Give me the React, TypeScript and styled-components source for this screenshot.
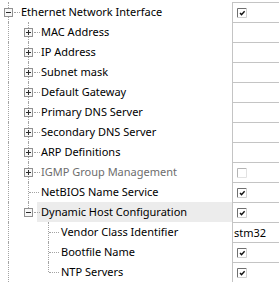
import React from 'react';
import styled, {createGlobalStyle} from 'styled-components';

type Kind = 'plus' | 'minus' | 'leaf';
type Value = {type: 'check'; checked: boolean} | {type: 'text'; text: string};

interface IRow {
  label: string;
  level: number;
  kind: Kind;
  last?: boolean;
  disabled?: boolean;
  selected?: boolean;
  value?: Value;
}

const rows: IRow[] = [
  {label: 'Ethernet Network Interface', level: 0, kind: 'minus', value: {type: 'check', checked: true}},
  {label: 'MAC Address', level: 1, kind: 'plus'},
  {label: 'IP Address', level: 1, kind: 'plus'},
  {label: 'Subnet mask', level: 1, kind: 'plus'},
  {label: 'Default Gateway', level: 1, kind: 'plus'},
  {label: 'Primary DNS Server', level: 1, kind: 'plus'},
  {label: 'Secondary DNS Server', level: 1, kind: 'plus'},
  {label: 'ARP Definitions', level: 1, kind: 'plus'},
  {label: 'IGMP Group Management', level: 1, kind: 'plus', disabled: true, value: {type: 'check', checked: false}},
  {label: 'NetBIOS Name Service', level: 1, kind: 'leaf', value: {type: 'check', checked: true}},
  {label: 'Dynamic Host Configuration', level: 1, kind: 'minus', last: true, selected: true, value: {type: 'check', checked: true}},
  {label: 'Vendor Class Identifier', level: 2, kind: 'leaf', value: {type: 'text', text: 'stm32'}},
  {label: 'Bootfile Name', level: 2, kind: 'leaf', value: {type: 'check', checked: true}},
  {label: 'NTP Servers', level: 2, kind: 'leaf', last: true, value: {type: 'check', checked: true}},
];

const GlobalStyle = createGlobalStyle`
  html, body {
    margin: 0;
    padding: 0;
    background: #fff;
  }
  body {
    font-family: "Noto Sans", "DejaVu Sans", sans-serif;
    font-size: 11px;
    color: #000;
  }
`;

const ExpandBox = ({open}: {open: boolean}) => (
  <svg width="9" height="9" viewBox="0 0 9 9">
    <rect x="0.5" y="0.5" width="8" height="8" fill="#f7f7f7" stroke="#919191" />
    <line x1="2" y1="4.5" x2="7" y2="4.5" stroke="#2b2b2b" />
    {!open && <line x1="4.5" y1="2" x2="4.5" y2="7" stroke="#2b2b2b" />}
  </svg>
);

const CheckBox = ({checked, disabled}: {checked: boolean; disabled?: boolean}) => (
  <svg width="10" height="10" viewBox="0 0 10 10">
    <rect x="0" y="0" width="10" height="10" fill="#fff" />
    <path d="M0.5 9.5 V0.5 H9.5" fill="none" stroke={disabled ? '#b4b4b4' : '#6f6f6f'} />
    <path d="M9.5 0.5 V9.5 H0.5" fill="none" stroke={disabled ? '#e2e2e2' : '#d0d0d0'} />
    {checked && (
      <path d="M3 5 L4.5 6.6 L7.6 3.2" fill="none" stroke="#111" strokeWidth="1.4" />
    )}
  </svg>
);

const guidesFor = (row: IRow) => {
  // continuation of the ancestors' lines: root line always runs on,
  // the level one line stops after the last child (Dynamic Host Configuration)
  const guides: {vert: 'full' | 'top' | 'none'; kind?: Kind}[] = [];
  for (let j = 0; j < row.level; j++) {
    guides.push({vert: j === 0 ? 'full' : 'none'});
  }
  guides.push({vert: row.last ? 'top' : 'full', kind: row.kind});
  return guides;
};

const App = () => {
  return (
    <>
      <GlobalStyle />
      <Tree role="tree" aria-label="Ethernet Network Interface">
        {rows.map(row => (
          <Row key={row.label} role="treeitem">
            <NameCell>
              {guidesFor(row).map((g, i) => (
                <Guide key={i} $vert={g.vert} $branch={g.kind === 'leaf'}>
                  {g.kind && g.kind !== 'leaf' && <ExpandBox open={g.kind === 'minus'} />}
                  {g.kind && g.kind !== 'leaf' && <BoxTail />}
                </Guide>
              ))}
              <Label $disabled={row.disabled} $selected={row.selected}>
                {row.label}
              </Label>
            </NameCell>
            <ValueCell $text={row.value?.type === 'text'}>
              {row.value?.type === 'check' && (
                <CheckBox checked={row.value.checked} disabled={row.disabled} />
              )}
              {row.value?.type === 'text' && row.value.text}
            </ValueCell>
          </Row>
        ))}
      </Tree>
    </>
  );
};

export default App;

const Tree = styled.div`
  width: 279px;
  height: 282px;
  overflow: hidden;
  padding-top: 2px;
  box-sizing: border-box;
`;

const Row = styled.div`
  display: flex;
  height: 20px;
`;

const NameCell = styled.div`
  width: 232px;
  display: flex;
  align-items: stretch;
  flex-shrink: 0;
`;

const Guide = styled.div<{$vert: 'full' | 'top' | 'none'; $branch: boolean}>`
  position: relative;
  width: 20px;
  flex-shrink: 0;
  display: flex;
  align-items: center;
  padding-left: 4px;
  box-sizing: border-box;

  &::before {
    content: '';
    display: ${p => (p.$vert === 'none' ? 'none' : 'block')};
    position: absolute;
    left: 8px;
    top: 0;
    height: ${p => (p.$vert === 'top' ? '10px' : '20px')};
    border-left: 1px dotted #a3a3a3;
  }

  &::after {
    content: '';
    display: ${p => (p.$branch ? 'block' : 'none')};
    position: absolute;
    left: 9px;
    width: 10px;
    top: 10px;
    border-top: 1px dotted #a3a3a3;
  }

  svg {
    position: relative;
    z-index: 1;
  }
`;

const BoxTail = styled.span`
  width: 6px;
  margin-left: 1px;
  border-top: 1px dotted #a3a3a3;
`;

const Label = styled.div<{$disabled?: boolean; $selected?: boolean}>`
  flex: 1;
  margin-left: -3px;
  padding-left: 4px;
  line-height: 20px;
  white-space: nowrap;
  overflow: hidden;
  color: ${p => (p.$disabled ? '#6d6d6d' : '#000')};
  background: ${p => (p.$selected ? '#ececec' : 'transparent')};
`;

const ValueCell = styled.div<{$text?: boolean}>`
  flex: 1;
  display: flex;
  align-items: center;
  border-left: 1px solid #c4c4c4;
  border-top: 1px solid #c4c4c4;
  box-sizing: border-box;
  padding-left: ${p => (p.$text ? '1px' : '4px')};
  white-space: nowrap;
  overflow: hidden;
`;
